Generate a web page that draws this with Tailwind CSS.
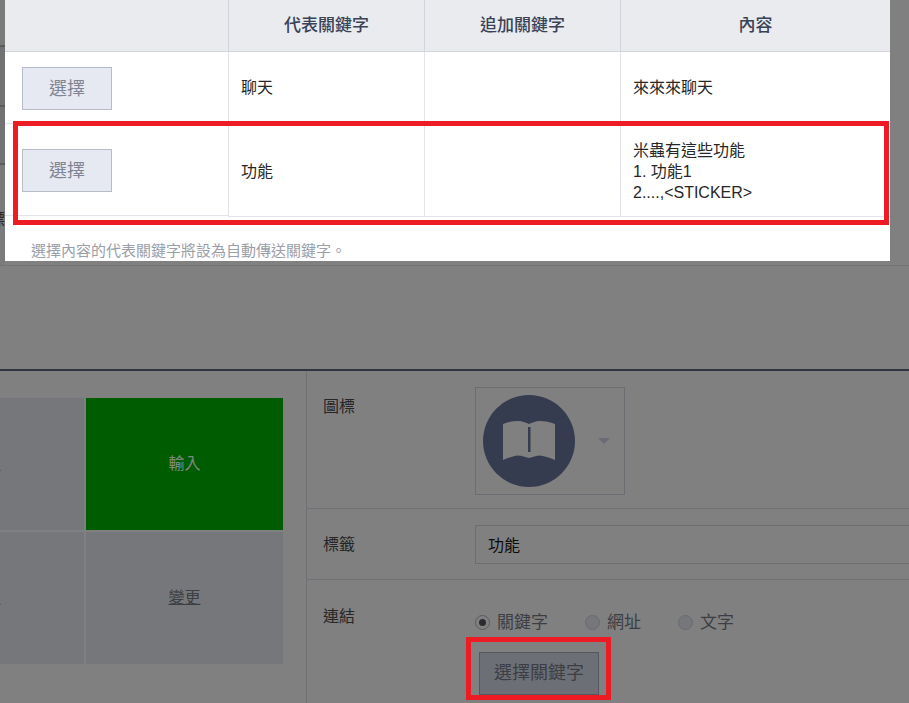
<!DOCTYPE html>
<html lang="zh-Hant">
<head>
<meta charset="utf-8">
<script src="https://cdn.jsdelivr.net/npm/@tailwindcss/browser@4"></script>
</head>
<body class="m-0 bg-[#808080]">
<div class="relative w-[909px] h-[703px] overflow-hidden bg-[#808080] text-[16px] leading-[21px] text-[#262626] font-['Liberation_Sans','Noto_Sans_CJK_TC',sans-serif]">

  <div class="h-[371px] border-b-2 border-[#2f3540] relative">
    <div class="absolute left-0 right-0 top-[265px] h-px bg-[#757575]"></div>
    <div class="absolute left-0 w-[5px] top-0 h-[265px] bg-[#7a7a7a]">
      <div class="absolute left-0 right-0 top-[45px] h-[60px] bg-[#717274] border-t-2 border-[#5c5c5c]"></div>
      <div class="absolute left-0 right-0 top-[105px] h-[58px] bg-[#717274] border-t-2 border-[#5c5c5c]"></div>
      <div class="absolute left-0 right-0 top-[163px] h-[2px] bg-[#5c5c5c]"></div>
    </div>
  </div>

  <div class="flex h-[332px]">
    <div class="w-[307px] shrink-0 border-r border-[#6f7073] pt-[27px]">
      <div class="grid grid-cols-[84px_197px] grid-rows-[132px_132px] gap-[2px] w-[283px]">
        <div class="bg-[#76777a] flex items-center"><div class="mt-[12px] w-[1px] h-px bg-[#5a5b5e]"></div></div>
        <div class="bg-[#005c00] flex items-center justify-center text-[#7f8a7f] pb-[2px]">輸入</div>
        <div class="bg-[#76777a] flex items-center"><div class="mt-[12px] w-[1px] h-px bg-[#5a5b5e]"></div></div>
        <div class="bg-[#76777a] flex items-center justify-center text-[#3c3e44] underline pb-[2px]">變更</div>
      </div>
    </div>
    <div class="flex-1 min-w-0">
      <div class="flex h-[138px] border-b border-[#6f7073]">
        <div class="w-[168px] pl-[16px] pt-[25px]">圖標</div>
        <div class="mt-[16px] w-[150px] h-[108px] border border-[#6c6d73] flex items-center pl-[7px]">
          <div class="w-[92px] h-[92px] rounded-full bg-[#363c50] flex items-center justify-center">
            <svg width="52" height="39" viewBox="0 0 52 39" class="mt-[-1px]">
              <path fill="#808080" d="M0 3C5 1 10 0 15 0C20 0 23 2 26 3C29 2 32 0 37 0C42 0 47 1 52 3V39C47 37 42 35 37 34.5C33 34.5 30 36 26 37C22 36 19 34.5 15 34.5C10 35 5 37 0 39Z"/>
              <rect x="25" y="6" width="2.5" height="25" fill="#363c50"/>
            </svg>
          </div>
          <div class="ml-[23px] w-0 h-0 border-x-[6.5px] border-x-transparent border-t-[6px] border-t-[#696b75]"></div>
        </div>
      </div>
      <div class="flex h-[71px] border-b border-[#6f7073]">
        <div class="w-[168px] pl-[16px] pt-[25px]">標籤</div>
        <div class="mt-[16px] flex-1 h-[39px] border border-[#6c6d73] border-r-0 flex items-center pl-[12px] pt-[2px] text-[#0c0c0c]">功能</div>
      </div>
      <div class="flex">
        <div class="w-[168px] pl-[16px] pt-[26px]">連結</div>
        <div class="pt-[32px]">
          <div class="flex items-center h-[21px] text-[17px] text-[#3c3e44]">
            <span class="w-[15px] h-[15px] rounded-full border border-[#5a5b60] bg-[#808080] flex items-center justify-center"><span class="w-[7px] h-[7px] rounded-full bg-[#2c2c30]"></span></span>
            <span class="ml-[7px] w-[51px]">關鍵字</span>
            <span class="ml-[37px] w-[15px] h-[15px] rounded-full border border-[#6a6b70] bg-[#76777a]"></span>
            <span class="ml-[7px] w-[34px]">網址</span>
            <span class="ml-[37px] w-[15px] h-[15px] rounded-full border border-[#6a6b70] bg-[#76777a]"></span>
            <span class="ml-[7px]">文字</span>
          </div>
          <div class="mt-[19px] ml-[4px] w-[120px] h-[43px] border border-[#55575e] bg-[#6d6f76] flex items-center justify-center text-[18px] text-[#3c3e44]">選擇關鍵字</div>
        </div>
      </div>
    </div>
  </div>

  <div class="absolute left-0 top-[209px] w-[5px] h-[21px] overflow-hidden flex justify-end"><span class="shrink-0">標</span></div>

  <!-- modal -->
  <div class="absolute left-[5px] top-0 w-[885px] h-[261px] bg-white">
    <div class="grid grid-cols-[224px_196px_196px_269px] h-[52px] bg-[#e9ebef] border-b border-[#d2d4db] text-[#3a4256] font-medium text-[17px]">
      <div class="border-r border-[#d2d4db]"></div>
      <div class="border-r border-[#d2d4db] flex items-center justify-center">代表關鍵字</div>
      <div class="border-r border-[#d2d4db] flex items-center justify-center">追加關鍵字</div>
      <div class="flex items-center justify-center">內容</div>
    </div>
    <div class="grid grid-cols-[224px_196px_196px_269px] h-[72px] border-b border-[#e3e4ea]">
      <div class="border-r border-[#e3e4ea] pl-[17px] pt-[15px]">
        <div class="w-[90px] h-[43px] bg-[#e6e9f1] border border-[#b7bcc9] text-[#7f8594] text-[18px] pt-[2px] flex items-center justify-center">選擇</div>
      </div>
      <div class="border-r border-[#e3e4ea] pl-[12px] flex items-center">聊天</div>
      <div class="border-r border-[#e3e4ea]"></div>
      <div class="pl-[12px] flex items-center">來來來聊天</div>
    </div>
    <div class="grid grid-cols-[223px_197px_196px_269px] h-[93px]">
      <div class="h-[92px] border-b border-[#e3e4ea] pl-[17px] pt-[25px]">
        <div class="w-[90px] h-[43px] bg-[#e6e9f1] border border-[#b7bcc9] text-[#7f8594] text-[18px] pt-[2px] flex items-center justify-center">選擇</div>
      </div>
      <div class="border-x border-b border-[#e3e4ea] pl-[12px] pt-[2px] flex items-center">功能</div>
      <div class="border-r border-b border-[#e3e4ea]"></div>
      <div class="border-b border-[#e3e4ea] pl-[12px] pt-[2px] flex flex-col justify-center">
        <div>米蟲有這些功能</div>
        <div>1. 功能1</div>
        <div>2....,&lt;STICKER&gt;</div>
      </div>
    </div>
    <p class="pl-[26px] mt-[24px] text-[15px] leading-[20px] text-[#9a9ea8]">選擇內容的代表關鍵字將設為自動傳送關鍵字。</p>
  </div>

  <!-- red annotations -->
  <div class="absolute left-[13px] top-[121px] w-[876px] h-[104px] border-[5px] border-[#ed1c24]"></div>
  <div class="absolute left-[466px] top-[637px] w-[145px] h-[63px] border-[5px] border-[#ed1c24]"></div>
</div>
</body>
</html>
